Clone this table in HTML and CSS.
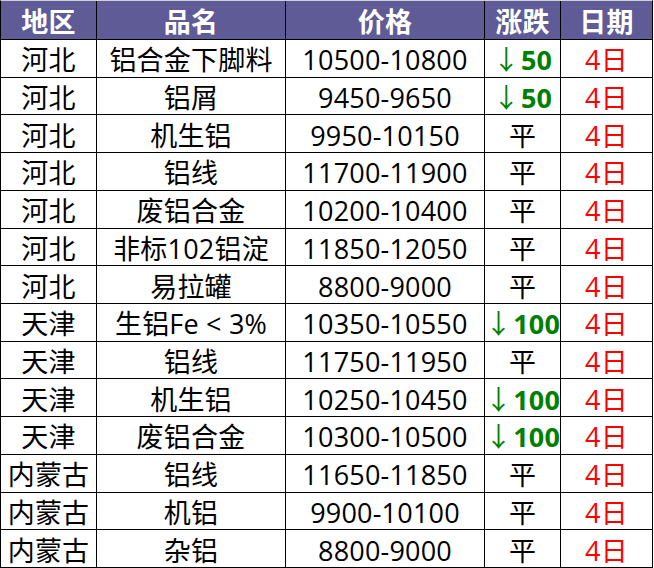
FILE: index.html
```html
<!DOCTYPE html>
<html lang="zh-CN">
<head>
<meta charset="utf-8">
<title>铝价</title>
<link rel="stylesheet" href="styles.css">
</head>
<body>
<div class="sheet">
  <div class="cell head">地区</div><div class="cell head">品名</div><div class="cell head">价格</div><div class="cell head">涨跌</div><div class="cell head">日期</div>

  <div class="cell">河北</div><div class="cell">铝合金下脚料</div><div class="cell">10500-10800</div><div class="cell down"><span class="arrow">↓</span>50</div><div class="cell date">4日</div>
  <div class="cell">河北</div><div class="cell">铝屑</div><div class="cell">9450-9650</div><div class="cell down"><span class="arrow">↓</span>50</div><div class="cell date">4日</div>
  <div class="cell">河北</div><div class="cell">机生铝</div><div class="cell">9950-10150</div><div class="cell">平</div><div class="cell date">4日</div>
  <div class="cell">河北</div><div class="cell">铝线</div><div class="cell">11700-11900</div><div class="cell">平</div><div class="cell date">4日</div>
  <div class="cell">河北</div><div class="cell">废铝合金</div><div class="cell">10200-10400</div><div class="cell">平</div><div class="cell date">4日</div>
  <div class="cell">河北</div><div class="cell">非标102铝淀</div><div class="cell">11850-12050</div><div class="cell">平</div><div class="cell date">4日</div>
  <div class="cell">河北</div><div class="cell">易拉罐</div><div class="cell">8800-9000</div><div class="cell">平</div><div class="cell date">4日</div>
  <div class="cell">天津</div><div class="cell">生铝Fe &lt; 3%</div><div class="cell">10350-10550</div><div class="cell down"><span class="arrow">↓</span>100</div><div class="cell date">4日</div>
  <div class="cell">天津</div><div class="cell">铝线</div><div class="cell">11750-11950</div><div class="cell">平</div><div class="cell date">4日</div>
  <div class="cell">天津</div><div class="cell">机生铝</div><div class="cell">10250-10450</div><div class="cell down"><span class="arrow">↓</span>100</div><div class="cell date">4日</div>
  <div class="cell">天津</div><div class="cell">废铝合金</div><div class="cell">10300-10500</div><div class="cell down"><span class="arrow">↓</span>100</div><div class="cell date">4日</div>
  <div class="cell">内蒙古</div><div class="cell">铝线</div><div class="cell">11650-11850</div><div class="cell">平</div><div class="cell date">4日</div>
  <div class="cell">内蒙古</div><div class="cell">机铝</div><div class="cell">9900-10100</div><div class="cell">平</div><div class="cell date">4日</div>
  <div class="cell">内蒙古</div><div class="cell">杂铝</div><div class="cell">8800-9000</div><div class="cell">平</div><div class="cell date">4日</div>
</div>
</body>
</html>
```

FILE: styles.css
```css
html, body {
  margin: 0;
  padding: 0;
  background: #ffffff;
}

.sheet {
  box-sizing: border-box;
  width: 653px;
  height: 568px;
  display: grid;
  grid-template-columns: 95px 188px 198px 75px 91px;
  grid-template-rows: 38px repeat(14, 1fr);
  gap: 1px;
  background: #000000;
  border: 1px solid #000000;
  border-top: 1px solid #d0d0dc;
  font-family: "Open Sans", "Noto Sans CJK SC", sans-serif;
  font-size: 27px;
  color: #000000;
}

.cell {
  background: #ffffff;
  display: flex;
  align-items: center;
  justify-content: center;
  line-height: 1;
  white-space: nowrap;
  padding-top: 3px;
  letter-spacing: 0.2px;
}

.head {
  background: #5f5b97;
  color: #ffffff;
  font-weight: bold;
  padding-top: 2px;
}

.down {
  color: #008000;
  font-weight: bold;
}

.arrow {
  font-weight: normal;
  margin-right: 1px;
}

.date {
  color: #ff0000;
}
```
